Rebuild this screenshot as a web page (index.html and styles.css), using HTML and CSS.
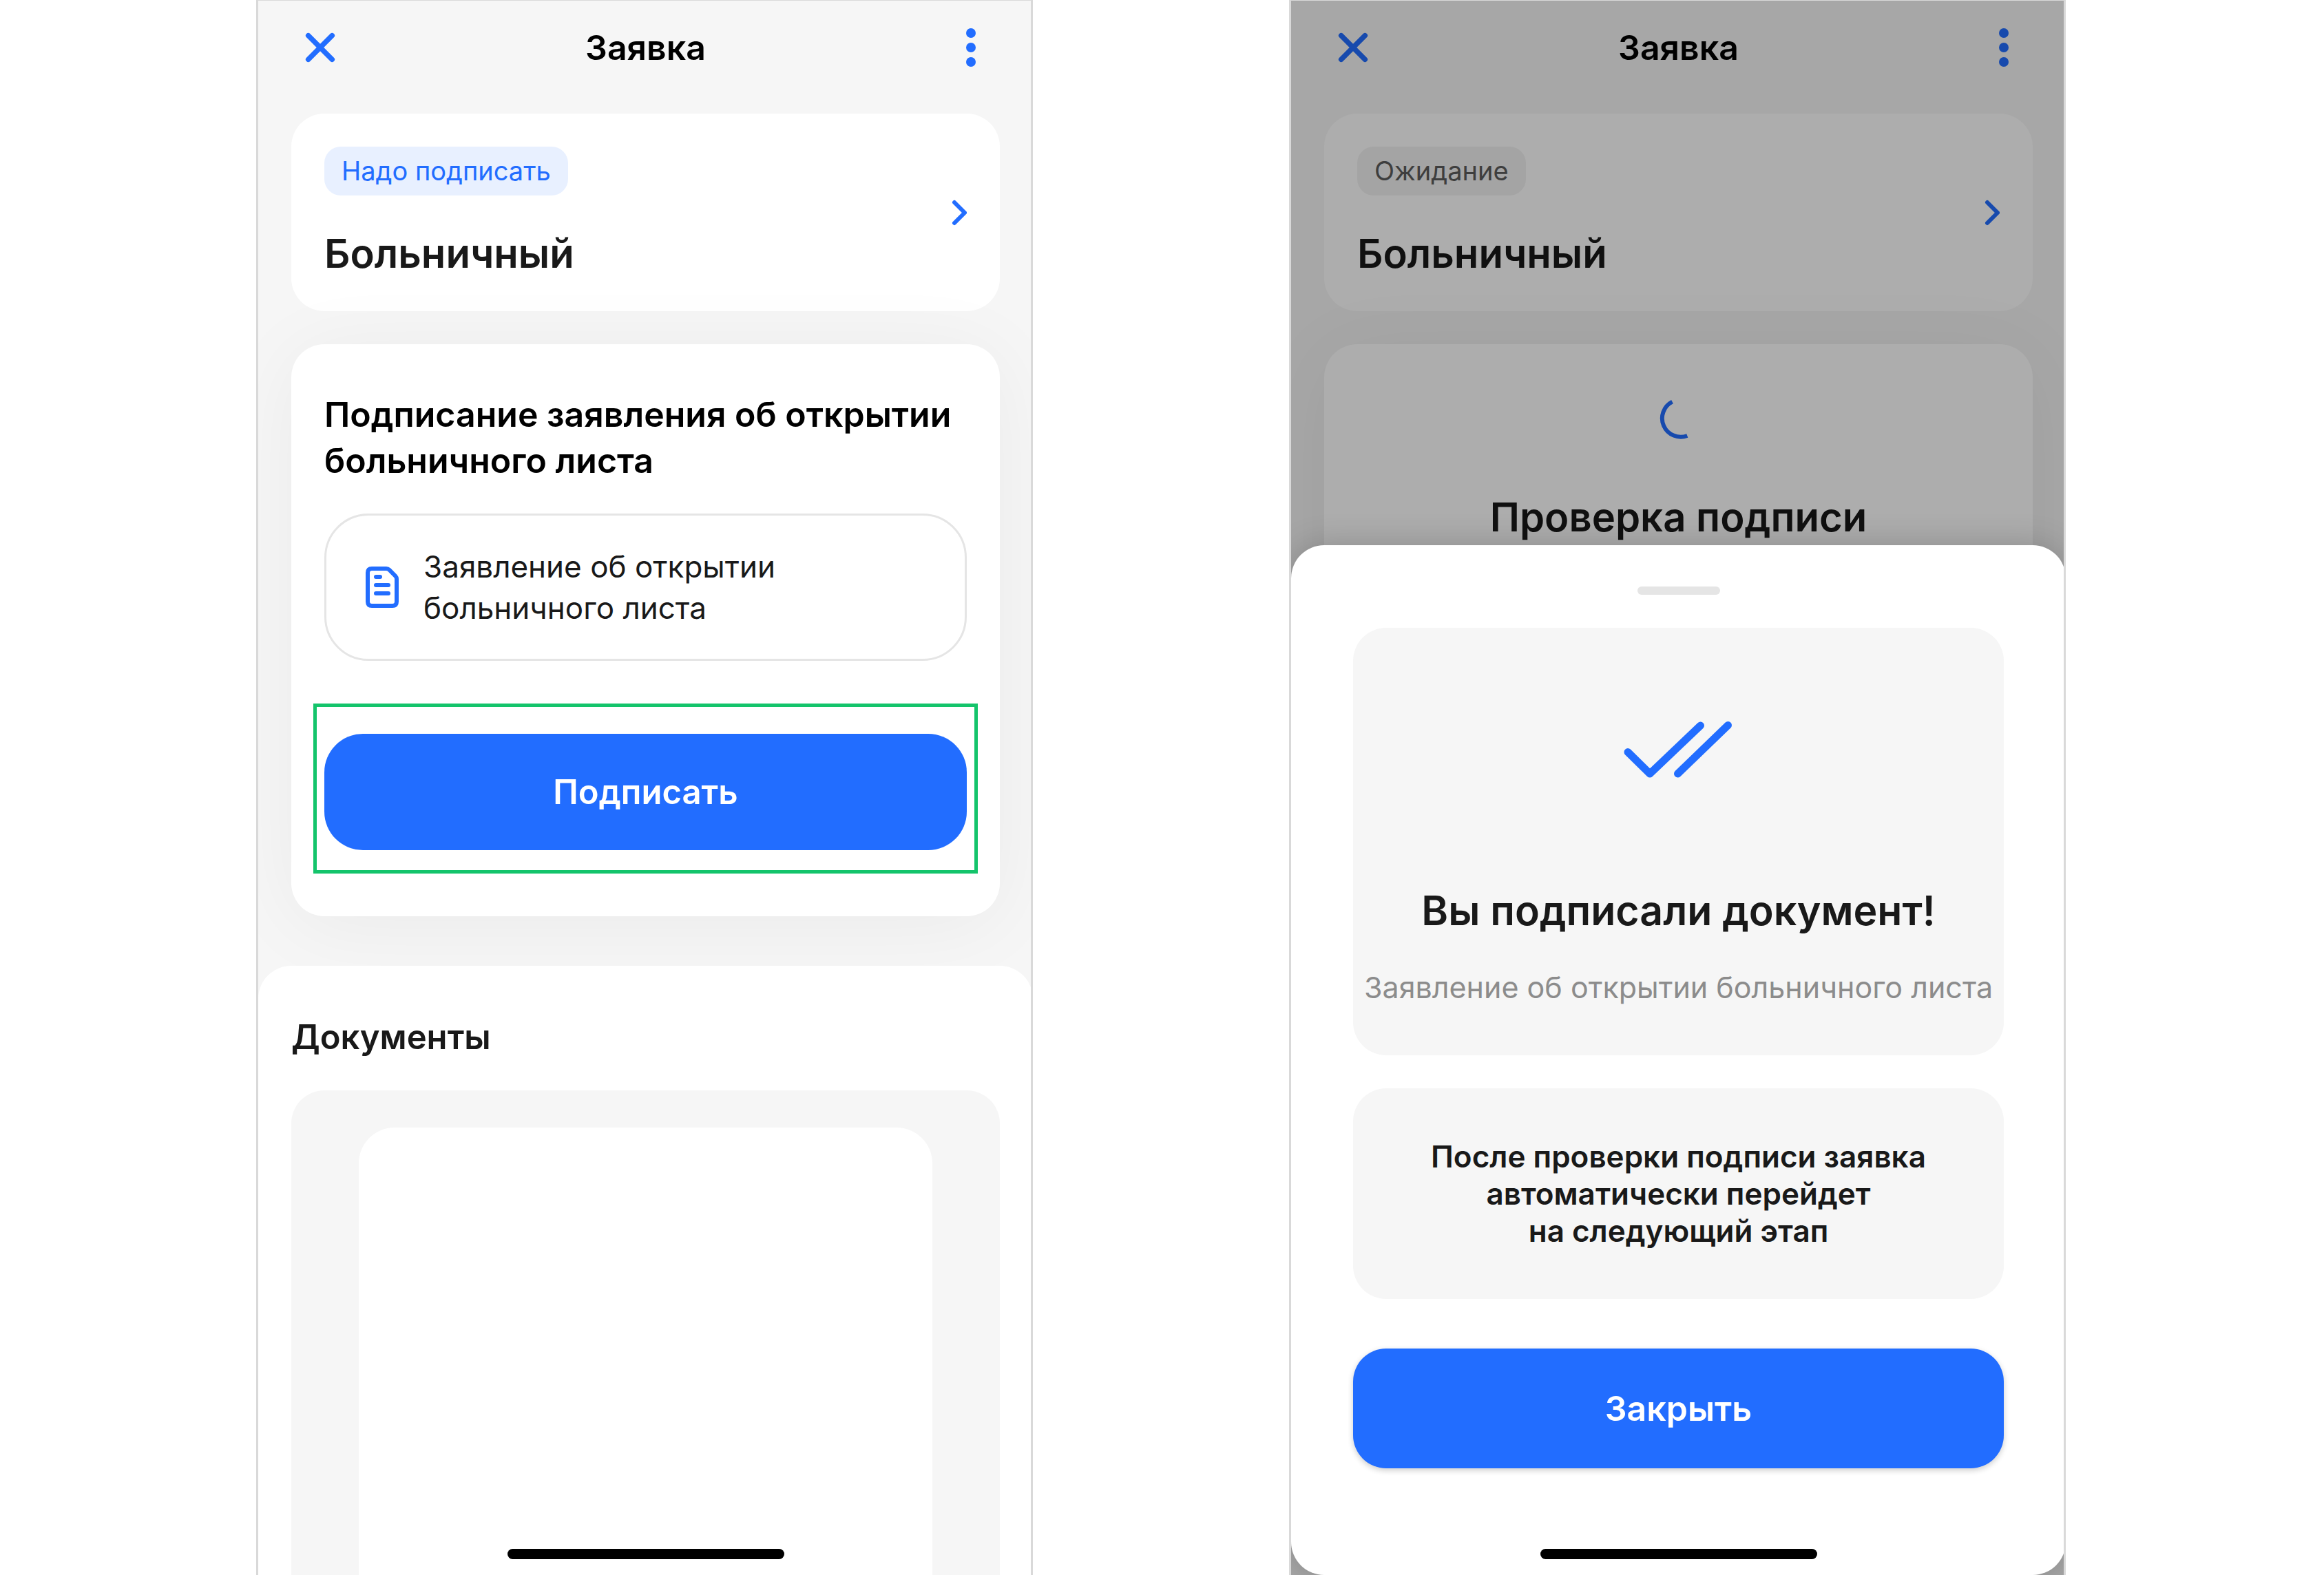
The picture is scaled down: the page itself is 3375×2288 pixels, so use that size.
FILE: index.html
```html
<!DOCTYPE html>
<html lang="ru">
<head>
<meta charset="utf-8">
<meta name="viewport" content="width=device-width, initial-scale=1">
<title>Заявка</title>
<link rel="stylesheet" href="styles.css">
</head>
<body>
<main class="board">
  <section class="phone">
    <header class="topbar">
      <button class="icon-btn" type="button" aria-label="Закрыть">
        <svg width="48" height="48" viewBox="0 0 48 48" fill="none" stroke="currentColor" stroke-width="7.5" stroke-linecap="round"><path d="M6.7 6.7 41.3 41.3M41.3 6.7 6.7 41.3"/></svg>
      </button>
      <h1 class="topbar-title">Заявка</h1>
      <button class="icon-btn" type="button" aria-label="Меню">
        <svg width="14" height="56" viewBox="0 0 14 56" fill="currentColor"><circle cx="7" cy="7" r="7"/><circle cx="7" cy="28" r="7"/><circle cx="7" cy="49" r="7"/></svg>
      </button>
    </header>
    <div class="cards">
      <a class="card request" href="#request">
        <span class="request-text">
          <span class="badge">Надо подписать</span>
          <span class="title">Больничный</span>
        </span>
        <svg width="24" height="40" viewBox="0 0 24 40" fill="none" stroke="currentColor" stroke-width="6" stroke-linecap="round" stroke-linejoin="round"><path d="M6 5 21 20 6 35"/></svg>
      </a>
      <article class="card signing">
        <h2 class="subtitle">Подписание заявления об открытии больничного листа</h2>
        <a class="doc" href="#doc">
          <svg width="48" height="60" viewBox="0 0 48 60" fill="none" stroke="currentColor" stroke-width="6" stroke-linecap="round" stroke-linejoin="round"><path d="M9 3H30Q32.500 3 34.200 4.700L43.300 13.800Q45 15.500 45 18V51Q45 57 39 57H9Q3 57 3 51V9Q3 3 9 3Z"/><path d="M15 15H21M15 27H33M15 39H33"/></svg>
          <span class="doc-name">Заявление об открытии больничного листа</span>
        </a>
        <div class="highlight">
          <button class="btn btn-sign" type="button">Подписать</button>
        </div>
      </article>
    </div>
    <section class="documents">
      <h2 class="subtitle documents-title">Документы</h2>
      <div class="preview"><div class="paper"></div></div>
    </section>
    <div class="home"></div>
  </section>

  <section class="phone">
    <header class="topbar">
      <button class="icon-btn" type="button" aria-label="Закрыть">
        <svg width="48" height="48" viewBox="0 0 48 48" fill="none" stroke="currentColor" stroke-width="7.5" stroke-linecap="round"><path d="M6.7 6.7 41.3 41.3M41.3 6.7 6.7 41.3"/></svg>
      </button>
      <h1 class="topbar-title">Заявка</h1>
      <button class="icon-btn" type="button" aria-label="Меню">
        <svg width="14" height="56" viewBox="0 0 14 56" fill="currentColor"><circle cx="7" cy="7" r="7"/><circle cx="7" cy="28" r="7"/><circle cx="7" cy="49" r="7"/></svg>
      </button>
    </header>
    <div class="cards">
      <a class="card request" href="#request">
        <span class="request-text">
          <span class="badge badge-wait">Ожидание</span>
          <span class="title">Больничный</span>
        </span>
        <svg width="24" height="40" viewBox="0 0 24 40" fill="none" stroke="currentColor" stroke-width="6" stroke-linecap="round" stroke-linejoin="round"><path d="M6 5 21 20 6 35"/></svg>
      </a>
      <article class="card checking">
        <svg class="spinner" width="60" height="60" viewBox="0 0 60 60" fill="none" stroke="currentColor" stroke-width="6"><path d="M20.500 4.700A27 27 0 0 0 42.300 54"/></svg>
        <h2 class="title">Проверка подписи</h2>
      </article>
    </div>
    <div class="overlay">
      <div class="sheet" role="dialog" aria-label="Вы подписали документ">
        <div class="grabber"></div>
        <div class="panel done">
          <svg width="160" height="84" viewBox="0 0 160 84" fill="none" stroke="currentColor" stroke-width="11" stroke-linecap="round" stroke-linejoin="round"><path d="M6 45.500 38 77 111.500 7M78.500 77 151.500 6.500"/></svg>
          <h2 class="title done-title">Вы подписали документ!</h2>
          <p class="done-doc">Заявление об открытии больничного листа</p>
        </div>
        <p class="panel note">После проверки подписи заявка<br>автоматически перейдет<br>на следующий этап</p>
        <button class="btn btn-close" type="button">Закрыть</button>
      </div>
    </div>
    <div class="home"></div>
  </section>
</main>
</body>
</html>
```
FILE: styles.css
```css
* { box-sizing: border-box; }

body {
  margin: 0;
  background: #fff;
  color: #191919;
  font-family: Inter, "Noto Sans", sans-serif;
}

h1, h2, p { margin: 0; }
a { color: inherit; text-decoration: none; }
svg { display: block; flex: none; }
button { border: 0; padding: 0; font: inherit; cursor: pointer; }

.board {
  display: grid;
  grid-template-columns: 1fr 1fr;
  column-gap: 372px;
  min-height: 100vh;
  padding: 0 375px 0 372px;
}

.phone {
  position: relative;
  display: flex;
  flex-direction: column;
  overflow: hidden;
  border: solid #d9d9d9;
  border-width: 1px 0 0 3px;
  background: #f6f6f6;
}

/* The right frame line lies over the screen's edge. */
.phone::after {
  content: "";
  position: absolute;
  inset: 0 0 0 auto;
  width: 3px;
  background: #d9d9d9;
}

.topbar {
  display: flex;
  align-items: center;
  justify-content: space-between;
  height: 136px;
  padding: 0 66px;
}

.icon-btn {
  display: flex;
  justify-content: center;
  width: 48px;
  background: none;
  color: #226dff;
}

.topbar-title {
  color: #000;
  font-size: 50px;
  font-weight: 600;
  line-height: 60px;
}

.cards {
  display: flex;
  flex-direction: column;
  gap: 48px;
  padding: 28px 48px 72px;
}

.card {
  border-radius: 48px;
  background: #fff;
}

.request {
  display: flex;
  align-items: center;
  justify-content: space-between;
  padding: 48px;
  color: #226dff;
}

.request-text {
  display: flex;
  flex-direction: column;
  align-items: flex-start;
  gap: 48px;
}

.badge {
  padding: 0 25px;
  border-radius: 24px;
  background: #e8f0ff;
  font-size: 38px;
  line-height: 71px;
}

.badge-wait {
  background: #f2f2f2;
  color: #5c5c5c;
}

.title {
  color: #191919;
  font-size: 58px;
  font-weight: 600;
  line-height: 72px;
}

.signing,
.checking {
  box-shadow: 0 12px 120px rgba(0, 0, 0, 0.05);
}

.signing { padding: 69px 48px 62px; }

.subtitle {
  color: #000;
  font-size: 50px;
  font-weight: 600;
  line-height: 67px;
}

.doc {
  display: flex;
  align-items: center;
  gap: 36px;
  margin-top: 43px;
  padding: 44px 57px;
  border: 3px solid #e5e5e5;
  border-radius: 64px;
  color: #226dff;
}

.doc-name {
  max-width: 600px;
  color: #191919;
  font-size: 44px;
  line-height: 60px;
}

.highlight {
  margin: 62px -16px 0;
  padding: 39px 11px 29px;
  border: 5px solid #14c46b;
}

.btn {
  display: block;
  width: 100%;
  background: #226dff;
  color: #fff;
  font-size: 50px;
  font-weight: 600;
}

.btn-sign {
  height: 169px;
  border-radius: 56px;
  font-size: 49px;
}

.documents {
  display: flex;
  flex: 1;
  flex-direction: column;
  padding: 70px 48px 0;
  border-radius: 48px 48px 0 0;
  background: #fff;
}

.documents-title {
  color: #191919;
  font-size: 49px;
}

.preview {
  display: flex;
  flex: 1;
  margin-top: 44px;
  padding: 54px 98px 0;
  border-radius: 48px 48px 0 0;
  background: #f6f6f6;
}

.paper {
  flex: 1;
  border-radius: 52px 52px 0 0;
  background: #fff;
}

.home {
  position: absolute;
  bottom: 23px;
  left: 50%;
  width: 402px;
  height: 15px;
  margin-left: -201px;
  border-radius: 8px;
  background: #000;
}

.checking {
  display: flex;
  flex-direction: column;
  align-items: center;
  gap: 76px;
  height: 600px;
  padding-top: 79px;
  color: #226dff;
}

.overlay {
  position: absolute;
  inset: 0;
  display: flex;
  align-items: flex-end;
  background: rgba(0, 0, 0, 0.32);
}

.sheet {
  display: flex;
  flex: 1;
  flex-direction: column;
  padding: 60px 90px 155px;
  border-radius: 48px;
  background: #fff;
  box-shadow: 0 0 48px rgba(0, 0, 0, 0.2);
}

.grabber {
  align-self: center;
  width: 120px;
  height: 12px;
  margin-bottom: 48px;
  border-radius: 6px;
  background: #e5e5e5;
}

.panel {
  border-radius: 48px;
  background: #f6f6f6;
  text-align: center;
}

.done {
  display: flex;
  flex-direction: column;
  align-items: center;
  padding: 135px 0 69px;
  color: #226dff;
}

.done-title {
  margin-top: 156px;
  font-size: 59px;
}

.done-doc {
  margin-top: 45px;
  color: #8c8c8c;
  font-size: 43px;
  line-height: 60px;
}

.note {
  margin: 48px 0 72px;
  padding: 72px 0;
  font-size: 44px;
  font-weight: 600;
  line-height: 54px;
}

.btn-close {
  height: 174px;
  border-radius: 48px;
  box-shadow: 0 3px 8px rgba(0, 0, 0, 0.2);
}
```
